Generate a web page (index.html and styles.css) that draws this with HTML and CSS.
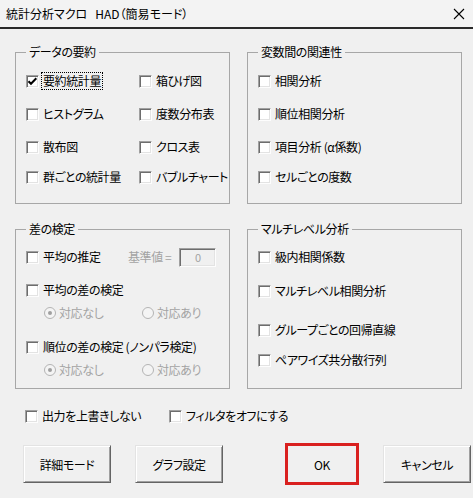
FILE: index.html
```html
<!DOCTYPE html>
<html lang="ja">
  <head>
    <meta charset="UTF-8" />
    <title>統計分析マクロ HAD（簡易モード）</title>
    <link rel="stylesheet" href="styles.css">
  </head>
  <body>
    <div class="titlebar">
      <span class="title">統計分析マクロ&nbsp;&nbsp;&nbsp;HAD（簡易モード）</span>
      <svg class="close" width="12" height="12" viewBox="0 0 12 12">
        <path d="M1 1 L11 11 M11 1 L1 11" stroke="#000" stroke-width="1.1" fill="none" />
      </svg>
    </div>

    <div class="groups">
      <!-- データの要約 -->
      <fieldset class="group">
        <legend>データの要約</legend>
        <div class="rows two-col rows-summary">
          <label class="cb"><span class="box checked"><svg width="11" height="11" viewBox="0 0 11 11"><path d="M1.5 5.2 L4 7.8 L9.3 2.2" stroke="#000" stroke-width="2" fill="none" /></svg></span><span class="txt focus">要約統計量</span></label>
          <label class="cb"><span class="box"></span><span class="txt">箱ひげ図</span></label>
          <label class="cb"><span class="box"></span><span class="txt">ヒストグラム</span></label>
          <label class="cb"><span class="box"></span><span class="txt">度数分布表</span></label>
          <label class="cb"><span class="box"></span><span class="txt">散布図</span></label>
          <label class="cb"><span class="box"></span><span class="txt">クロス表</span></label>
          <label class="cb"><span class="box"></span><span class="txt">群ごとの統計量</span></label>
          <label class="cb"><span class="box"></span><span class="txt">バブルチャート</span></label>
        </div>
      </fieldset>

      <!-- 変数間の関連性 -->
      <fieldset class="group">
        <legend>変数間の関連性</legend>
        <div class="rows rows-summary">
          <label class="cb"><span class="box"></span><span class="txt">相関分析</span></label>
          <label class="cb"><span class="box"></span><span class="txt">順位相関分析</span></label>
          <label class="cb"><span class="box"></span><span class="txt">項目分析 (α係数)</span></label>
          <label class="cb"><span class="box"></span><span class="txt">セルごとの度数</span></label>
        </div>
      </fieldset>

      <!-- 差の検定 -->
      <fieldset class="group">
        <legend>差の検定</legend>
        <div class="rows rows-diff">
          <div class="mean-row">
            <label class="cb"><span class="box"></span><span class="txt">平均の推定</span></label>
            <span class="disabled">基準値 =</span>
            <span class="field">0</span>
          </div>
          <label class="cb"><span class="box"></span><span class="txt">平均の差の検定</span></label>
          <div class="radio-row">
            <span class="rd"><span class="dot on"></span><span class="disabled">対応なし</span></span>
            <span class="rd"><span class="dot"></span><span class="disabled">対応あり</span></span>
          </div>
          <label class="cb"><span class="box"></span><span class="txt">順位の差の検定 (ノンパラ検定)</span></label>
          <div class="radio-row">
            <span class="rd"><span class="dot on"></span><span class="disabled">対応なし</span></span>
            <span class="rd"><span class="dot"></span><span class="disabled">対応あり</span></span>
          </div>
        </div>
      </fieldset>

      <!-- マルチレベル分析 -->
      <fieldset class="group">
        <legend>マルチレベル分析</legend>
        <div class="rows rows-multi">
          <label class="cb"><span class="box"></span><span class="txt">級内相関係数</span></label>
          <label class="cb"><span class="box"></span><span class="txt">マルチレベル相関分析</span></label>
          <label class="cb"><span class="box"></span><span class="txt">グループごとの回帰直線</span></label>
          <label class="cb"><span class="box"></span><span class="txt">ペアワイズ共分散行列</span></label>
        </div>
      </fieldset>
    </div>

    <div class="options">
      <label class="cb"><span class="box"></span><span class="txt">出力を上書きしない</span></label>
      <label class="cb"><span class="box"></span><span class="txt">フィルタをオフにする</span></label>
    </div>

    <div class="buttons">
      <button type="button" class="btn">詳細モード</button>
      <button type="button" class="btn btn-graph">グラフ設定</button>
      <button type="button" class="btn btn-ok">OK</button>
      <button type="button" class="btn btn-cancel">キャンセル</button>
    </div>
  </body>
</html>
```

FILE: styles.css
```css
* {
  margin: 0;
  padding: 0;
  box-sizing: border-box;
}

body {
  width: 473px;
  height: 498px;
  overflow: hidden;
  background-color: #f0f0f0;
  font-family: "Noto Sans CJK JP", "Noto Sans", sans-serif;
  font-feature-settings: "palt";
  font-size: 12px;
  line-height: 16px;
  letter-spacing: -0.4px;
  color: #000;
}

/* タイトルバー */
.titlebar {
  height: 29px;
  padding: 0 8px 0 6px;
  display: flex;
  align-items: center;
  justify-content: space-between;
  background-color: #f3f3f3;
  border-bottom: 2px solid #2a2a2a;
}

.title {
  font-size: 12px;
  letter-spacing: 0;
}

/* グループボックス */
.groups {
  display: grid;
  grid-template-columns: 215px 215px;
  grid-template-rows: 160px 168px;
  column-gap: 17px;
  row-gap: 17px;
  padding: 15px 0 0 15px;
}

.group {
  border: 1px solid #a7a7a7;
  padding: 0 0 0 10px;
  margin: 0;
  min-width: 0;
}

.group legend {
  padding: 0 3px;
  line-height: 16px;
}

.rows {
  display: grid;
  align-items: start;
  padding-top: 11px;
}

.rows-summary {
  grid-template-rows: 33px 33px 30px 20px;
}

.two-col {
  grid-template-columns: 113px auto;
}

.rows-diff {
  padding-top: 10px;
  grid-template-rows: 33px 23px 34px 23px 20px;
}

.rows-multi {
  padding-top: 10px;
  grid-template-rows: 34px 39px 30px 20px;
}

/* チェックボックス */
.cb {
  display: flex;
  align-items: center;
  gap: 2px;
  height: 20px;
  white-space: nowrap;
}

.box {
  width: 13px;
  height: 13px;
  flex: none;
  display: flex;
  align-items: center;
  justify-content: center;
  background-color: #fff;
  border: 1px solid;
  border-color: #a0a0a0 #fdfdfd #fdfdfd #a0a0a0;
  box-shadow: inset 1px 1px 0 #6d6d6d, inset -1px -1px 0 #e3e3e3;
}

.txt {
  padding: 0 1px;
  border: 1px dotted transparent;
}

.txt.focus {
  border-color: #000;
}

/* 差の検定 */
.mean-row {
  display: flex;
  align-items: center;
  height: 20px;
}

.mean-row .cb {
  width: 102px;
}

.disabled {
  color: #a3a3a3;
  white-space: nowrap;
}

.field {
  width: 37px;
  height: 19px;
  margin-left: 8px;
  display: flex;
  align-items: center;
  justify-content: center;
  color: #a3a3a3;
  font-size: 11px;
  border: 1px solid;
  border-color: #a0a0a0 #fdfdfd #fdfdfd #a0a0a0;
  box-shadow: inset 1px 1px 0 #6d6d6d, inset -1px -1px 0 #e3e3e3;
}

.radio-row {
  display: grid;
  grid-template-columns: 98px auto;
  height: 20px;
  align-items: center;
  padding-left: 18px;
}

.rd {
  display: flex;
  align-items: center;
  gap: 3px;
}

.dot {
  width: 12px;
  height: 12px;
  border-radius: 50%;
  border: 1px solid #b4b4b4;
  background-color: #f4f4f4;
  display: flex;
  align-items: center;
  justify-content: center;
}

.dot.on::after {
  content: "";
  width: 4px;
  height: 4px;
  border-radius: 50%;
  background-color: #a0a0a0;
}

/* 下部オプション */
.options {
  display: grid;
  grid-template-columns: 144px auto;
  margin-top: 17px;
  padding-left: 25px;
}

/* ボタン */
.buttons {
  display: flex;
  align-items: center;
  height: 38px;
  margin-top: 19px;
  padding-left: 23px;
}

.btn {
  width: 88px;
  height: 38px;
  flex: none;
  font-family: inherit;
  font-feature-settings: "palt";
  font-size: 12px;
  letter-spacing: -0.4px;
  color: #000;
  background-color: #f0f0f0;
  border: 1px solid;
  border-color: #e3e3e3 #646464 #646464 #e3e3e3;
  box-shadow: inset 1px 1px 0 #fff, inset -1px -1px 0 #a0a0a0;
}

.btn-graph {
  margin-left: 24px;
}

.btn-ok {
  width: 74px;
  height: 42px;
  margin-left: 62px;
  border: 3px solid #d9201f;
  box-shadow: none;
}

.btn-cancel {
  margin-left: 24px;
}
```
